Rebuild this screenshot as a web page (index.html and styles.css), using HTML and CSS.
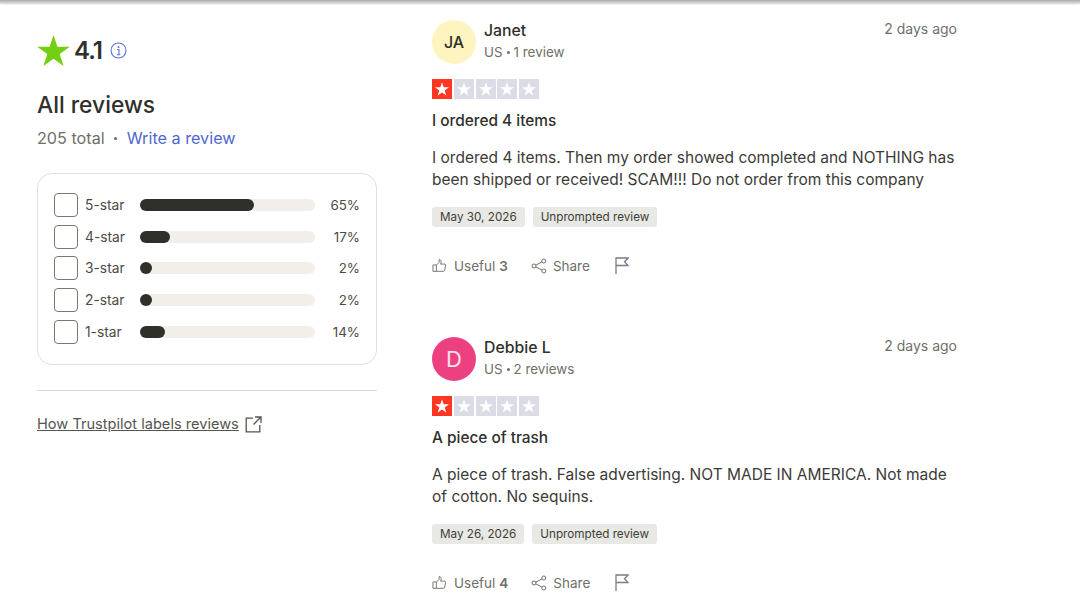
FILE: index.html
```html
<!DOCTYPE html>
<html>
	<head>
		<meta charset="utf-8">
		<title>All reviews</title>
		<link rel="stylesheet" href="styles.css">
	</head>
	<body>
		<div class="topshadow"></div>
		<svg width="0" height="0" class="defs">
			<symbol id="smallstar" viewBox="0 0 20 20"><path d="M10 3.2l1.7 5.1H17l-4.3 3.1 1.6 5.1L10 13.4l-4.3 3.1 1.6-5.1L3 8.3h5.3z" fill="#fff"/></symbol>
			<symbol id="thumb" viewBox="0 0 16 16"><path d="M4.6 14.2H1V7.4h3.6zM4.6 7.6l3-3V1.700c1.500 0 2.200 1 2.200 2.200 0 1-.3 1.900-.6 2.600h4.300c.7 0 1.100.6 1 1.200l-1 5.300c-.1.7-.6 1.200-1.300 1.200H4.600" fill="none" stroke="#6f6f69" stroke-width="1"/></symbol>
			<symbol id="share" viewBox="0 0 16 16"><g fill="none" stroke="#6f6f69" stroke-width="1"><circle cx="3" cy="8" r="2"/><circle cx="12.800" cy="3" r="2"/><circle cx="12.800" cy="13" r="2"/><path d="M4.800 7.100l6.200-3.200M4.800 8.900l6.200 3.200"/></g></symbol>
			<symbol id="flag" viewBox="0 0 14 17"><path d="M1 17V1h12l-3.500 3.700L13 8.500H1" fill="none" stroke="#7b7b88" stroke-width="1.300"/></symbol>
		</svg>
		<div class="page">
			<div class="sidebar">
				<div class="score">
					<svg class="bigstar" width="33" height="31" viewBox="0 0 34 32"><path d="M17 0l4 12.200h12.800L23.400 19.700 27.400 32 17 24.400 6.600 32l4-12.300L.2 12.200H13z" fill="#73cf11"/></svg>
					<span class="scorenum">4.1</span>
					<svg class="info" width="17" height="17" viewBox="0 0 17 17"><circle cx="8.500" cy="8.500" r="7.500" fill="none" stroke="#5b74d6" stroke-width="1.100"/><circle cx="8.500" cy="5" r="1" fill="#5b74d6"/><path d="M7 7.500h2v5M6.800 12.700h3.600" fill="none" stroke="#5b74d6" stroke-width="1.100"/></svg>
				</div>
				<h2 class="title">All reviews</h2>
				<div class="total">205 total<span class="dot"></span><a class="write">Write a review</a></div>
				<div class="card">
					<div class="row">
						<span class="box"></span><span class="lab">5-star</span>
						<span class="track"><span class="fill" style="width:65%"></span></span>
						<span class="pct">65%</span>
					</div>
					<div class="row">
						<span class="box"></span><span class="lab">4-star</span>
						<span class="track"><span class="fill" style="width:17%"></span></span>
						<span class="pct">17%</span>
					</div>
					<div class="row">
						<span class="box"></span><span class="lab">3-star</span>
						<span class="track"><span class="fill" style="width:7%"></span></span>
						<span class="pct">2%</span>
					</div>
					<div class="row">
						<span class="box"></span><span class="lab">2-star</span>
						<span class="track"><span class="fill" style="width:7%"></span></span>
						<span class="pct">2%</span>
					</div>
					<div class="row">
						<span class="box"></span><span class="lab">1-star</span>
						<span class="track"><span class="fill" style="width:14%"></span></span>
						<span class="pct">14%</span>
					</div>
				</div>
				<div class="rule"></div>
				<div class="how">
					<a class="howlink">How Trustpilot labels reviews</a>
					<svg width="17" height="17" viewBox="0 0 17 17"><path d="M8 2.200H1.200v13.600h13.600V9M10 1h6v6M16 1L8.500 8.500" fill="none" stroke="#55554f" stroke-width="1.300"/></svg>
				</div>
			</div>
			<div class="reviews">
				<div class="review">
					<div class="head">
						<div class="avatar yellow">JA</div>
						<div class="who">
							<div class="name">Janet</div>
							<div class="meta">US<span class="mdot"></span>1 review</div>
						</div>
						<div class="ago">2 days ago</div>
					</div>
					<div class="stars">
						<span class="s red"><svg width="20" height="20"><use href="#smallstar"/></svg></span>
						<span class="s"><svg width="20" height="20"><use href="#smallstar"/></svg></span>
						<span class="s"><svg width="20" height="20"><use href="#smallstar"/></svg></span>
						<span class="s"><svg width="20" height="20"><use href="#smallstar"/></svg></span>
						<span class="s"><svg width="20" height="20"><use href="#smallstar"/></svg></span>
					</div>
					<div class="rtitle">I ordered 4 items</div>
					<p class="body">I ordered 4 items. Then my order showed completed and NOTHING has been shipped or received! SCAM!!! Do not order from this company</p>
					<div class="tags"><span class="tag">May 30, 2026</span><span class="tag">Unprompted review</span></div>
					<div class="actions">
						<span class="act useful"><svg width="15" height="15"><use href="#thumb"/></svg>Useful <b>3</b></span>
						<span class="act sharebtn"><svg width="16" height="16"><use href="#share"/></svg>Share</span>
						<svg class="flag" width="14" height="17"><use href="#flag"/></svg>
					</div>
				</div>
				<div class="review">
					<div class="head">
						<div class="avatar pink">D</div>
						<div class="who">
							<div class="name">Debbie L</div>
							<div class="meta">US<span class="mdot"></span>2 reviews</div>
						</div>
						<div class="ago">2 days ago</div>
					</div>
					<div class="stars">
						<span class="s red"><svg width="20" height="20"><use href="#smallstar"/></svg></span>
						<span class="s"><svg width="20" height="20"><use href="#smallstar"/></svg></span>
						<span class="s"><svg width="20" height="20"><use href="#smallstar"/></svg></span>
						<span class="s"><svg width="20" height="20"><use href="#smallstar"/></svg></span>
						<span class="s"><svg width="20" height="20"><use href="#smallstar"/></svg></span>
					</div>
					<div class="rtitle">A piece of trash</div>
					<p class="body">A piece of trash. False advertising. NOT MADE IN AMERICA. Not made of cotton. No sequins.</p>
					<div class="tags"><span class="tag">May 26, 2026</span><span class="tag">Unprompted review</span></div>
					<div class="actions">
						<span class="act useful"><svg width="15" height="15"><use href="#thumb"/></svg>Useful <b>4</b></span>
						<span class="act sharebtn"><svg width="16" height="16"><use href="#share"/></svg>Share</span>
						<svg class="flag" width="14" height="17"><use href="#flag"/></svg>
					</div>
				</div>
			</div>
		</div>
	</body>
</html>
```
FILE: styles.css
```css
html, body {
	margin: 0;
	height: 603px;
	overflow: hidden;
	background: #fff;
}

body {
	font-family: "Inter", "Liberation Sans", sans-serif;
	color: #2f2f2b;
	font-size: 15px;
}

.defs {
	display: none;
}

.topshadow {
	height: 3px;
	background: linear-gradient(#a9a9a9, #d9d9d9);
	box-shadow: 0 1px 2px #ccc;
}

.page {
	display: flex;
	gap: 55px;
	padding-left: 37px;
}

/* left column */
.sidebar {
	width: 340px;
	flex: none;
	padding-top: 30px;
}

.score {
	display: flex;
	align-items: center;
	height: 34px;
}

.scorenum {
	font-size: 24px;
	font-weight: 600;
	margin-left: 4px;
	letter-spacing: -1px;
}

.info {
	margin-left: 8px;
}

.title {
	font-size: 22.800px;
	font-weight: 500;
	margin: 24px 0 0;
	line-height: 28px;
}

.total {
	margin-top: 7px;
	line-height: 24px;
	font-size: 16.200px;
	color: #6f6f69;
	display: flex;
	align-items: center;
}

.dot {
	width: 3px;
	height: 3px;
	border-radius: 50%;
	background: #6f6f69;
	margin: 1px 10px 0 9px;
}

.write {
	color: #4f68cf;
}

.card {
	margin-top: 23px;
	height: 192px;
	box-sizing: border-box;
	border: 1px solid #e3e0dc;
	border-radius: 15px;
	padding: 19px 16px;
	display: flex;
	flex-direction: column;
	gap: 7.700px;
}

.row {
	display: flex;
	align-items: center;
	height: 24px;
	font-size: 13.800px;
	color: #4b4b46;
}

.box {
	width: 22px;
	height: 22px;
	border: 1px solid #77776f;
	border-radius: 4px;
	flex: none;
}

.lab {
	width: 55px;
	margin-left: 7px;
}

.track {
	width: 175px;
	height: 12px;
	border-radius: 6px;
	background: #f2efea;
	display: block;
}

.fill {
	display: block;
	height: 12px;
	border-radius: 6px;
	background: #2f302a;
}

.pct {
	flex: 1;
	text-align: right;
	font-size: 13.400px;
}

.rule {
	height: 1px;
	background: #dcdad6;
	margin-top: 25px;
}

.how {
	margin-top: 24px;
	display: flex;
	align-items: center;
	gap: 6px;
	font-size: 14.600px;
	color: #55554f;
}

.howlink {
	text-decoration: underline;
}

/* reviews */
.reviews {
	width: 525px;
	padding-top: 17px;
}

.review + .review {
	margin-top: 63px;
}

.head {
	display: flex;
}

.avatar {
	width: 44px;
	height: 44px;
	border-radius: 50%;
	display: flex;
	align-items: center;
	justify-content: center;
	flex: none;
}

.yellow {
	background: #fdf4c0;
	font-size: 16px;
	font-weight: 500;
	color: #2f2f2b;
}

.pink {
	background: #ec4080;
	font-size: 22px;
	color: #fbe3ec;
}

.who {
	margin-left: 8px;
	flex: 1;
}

.name {
	padding-top: 1px;
	font-size: 15.800px;
	font-weight: 500;
	line-height: 20px;
}

.meta {
	margin-top: 1px;
	font-size: 13.400px;
	line-height: 20px;
	color: #6f6f69;
	display: flex;
	align-items: center;
}

.mdot {
	width: 3px;
	height: 3px;
	border-radius: 50%;
	background: #6f6f69;
	margin: 1px 4px 0 4px;
}

.ago {
	font-size: 14px;
	color: #6f6f69;
	line-height: 18px;
}

.stars {
	margin-top: 15px;
	display: flex;
	gap: 1.750px;
}

.s {
	width: 20px;
	height: 20px;
	background: #dcdce6;
	display: block;
}

.s svg {
	display: block;
}

.red {
	background: #ff3722;
}

.rtitle {
	margin-top: 12px;
	font-size: 15.400px;
	font-weight: 500;
	line-height: 20px;
}

.body {
	margin: 16px 0 0;
	font-size: 15.500px;
	line-height: 22px;
	color: #3b3b37;
}

.tags {
	margin-top: 16px;
	display: flex;
	gap: 8px;
}

.tag {
	background: #e8e8e4;
	border-radius: 3px;
	height: 20px;
	line-height: 20px;
	padding: 0 8px;
	font-size: 11.700px;
	color: #3f3f3a;
}

.actions {
	margin-top: 30px;
	display: flex;
	align-items: center;
	font-size: 13.500px;
	color: #6f6f69;
}

.act {
	display: flex;
	align-items: center;
	gap: 7px;
}

.act b {
	font-weight: 600;
	margin-left: -3px;
}

.sharebtn {
	margin-left: 23px;
	gap: 6px;
}

.flag {
	margin-left: 25px;
}
```
